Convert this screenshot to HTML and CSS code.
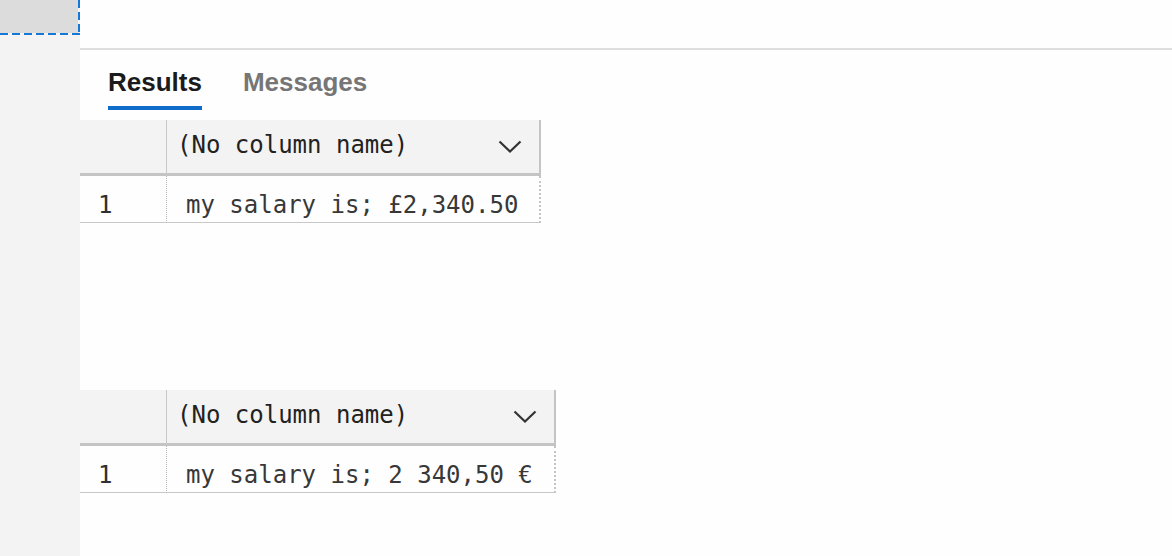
FILE: index.html
```html
<!DOCTYPE html>
<html lang="en">
<head>
<meta charset="utf-8">
<title>Results</title>
<link rel="stylesheet" href="styles.css">
</head>
<body>
<div class="sidebar">
  <div class="sel"></div>
</div>
<div class="main">
  <div class="topbar"></div>
  <div class="tabs">
    <div class="tab active">Results</div>
    <div class="tab">Messages</div>
  </div>
  <div class="grid first">
    <div class="hcell rowhead"></div>
    <div class="hcell colhead">
      <span>(No column name)</span>
      <svg class="chev" width="24" height="13" viewBox="0 0 24 13"><polyline points="1.5,1.5 12,11.5 22.5,1.5" fill="none" stroke="#333" stroke-width="2.2"/></svg>
    </div>
    <div class="dcell rownum">1</div>
    <div class="dcell val">my salary is; £2,340.50</div>
  </div>
  <div class="grid second">
    <div class="hcell rowhead"></div>
    <div class="hcell colhead">
      <span>(No column name)</span>
      <svg class="chev" width="24" height="13" viewBox="0 0 24 13"><polyline points="1.5,1.5 12,11.5 22.5,1.5" fill="none" stroke="#333" stroke-width="2.2"/></svg>
    </div>
    <div class="dcell rownum">1</div>
    <div class="dcell val">my salary is; 2 340,50 €</div>
  </div>
</div>
</body>
</html>
```
FILE: styles.css
```css
html, body {
  margin: 0;
  padding: 0;
  height: 100%;
}
body {
  display: flex;
  width: 1172px;
  height: 556px;
  overflow: hidden;
  background: #fefefe;
  font-family: "Liberation Sans", Arial, sans-serif;
}
.sidebar {
  width: 80px;
  flex: none;
  background: #f3f3f3;
}
.sel {
  width: 80px;
  height: 35px;
  background:
    repeating-linear-gradient(to right, #1478d4 0 8px, transparent 8px 12px) left bottom / 80px 2px no-repeat,
    repeating-linear-gradient(to bottom, #1478d4 0 8px, transparent 8px 12px) right top / 2px 35px no-repeat,
    linear-gradient(#dcdcdc, #dcdcdc) left top / 78px 33px no-repeat,
    #f3f3f3;
}
.main {
  flex: 1;
  display: flex;
  flex-direction: column;
  align-items: flex-start;
}
.topbar {
  align-self: stretch;
  height: 48px;
  border-bottom: 2px solid #dedede;
}
.tabs {
  display: flex;
  gap: 41px;
  padding-left: 28px;
  margin-top: 17px;
}
.tab {
  font-size: 26px;
  font-weight: 700;
  line-height: 30px;
  color: #767676;
  padding-bottom: 9px;
  border-bottom: 4px solid transparent;
}
.tab.active {
  color: #1b1b1b;
  border-bottom-color: #0f6cc8;
}
.grid {
  display: grid;
  grid-template-columns: 87px auto;
  font-family: "DejaVu Sans Mono", "Liberation Mono", monospace;
  font-size: 24px;
  color: #2f2f2f;
}
.grid.first {
  margin-top: 10px;
}
.grid.second {
  margin-top: 167px;
}
.hcell {
  background: #f3f3f3;
  height: 53px;
  border-bottom: 3px solid #c4c4c4;
  box-sizing: content-box;
}
.rowhead {
  border-right: 1px solid #c8c8c8;
}
.colhead {
  display: flex;
  align-items: center;
  justify-content: space-between;
  padding: 0 17px 4px 10px;
  height: 49px;
  border-right: 2px solid #c4c4c4;
  color: #222;
}
.chev {
  margin-top: 4px;
}
.dcell {
  height: 34px;
  line-height: 34px;
  padding-top: 12px;
  border-bottom: 1px solid #c8c8c8;
  white-space: pre;
}
.rownum {
  padding-left: 18px;
  border-right: 1px dotted #b4b4b4;
}
.val {
  padding-left: 19px;
  padding-right: 21px;
  border-right: 2px dotted #c4c4c4;
  color: #383838;
}
```
